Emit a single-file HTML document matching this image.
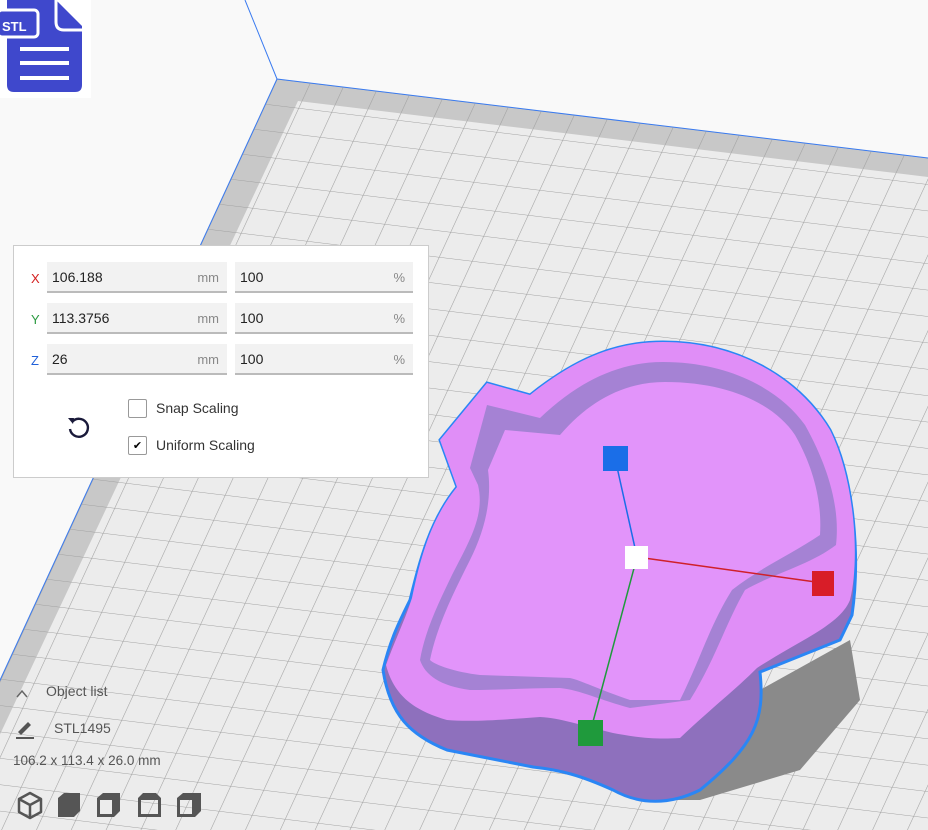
<!DOCTYPE html>
<html><head><style>
body{margin:0;width:928px;height:830px;overflow:hidden;background:#f9f9f9;font-family:"Liberation Sans",sans-serif;position:relative}
svg{position:absolute;left:0;top:0}
.panel{position:absolute;left:13px;top:245px;width:416px;height:233px;background:#fff;border:1px solid #ccc;box-sizing:border-box}
.row{position:absolute;left:0;height:32px;width:415px}
.lab{position:absolute;left:17px;top:9px;font-size:13px}
.f{position:absolute;top:0;height:31px;background:#f2f2f2;border-bottom:2px solid #bbb;font-size:14px;color:#222;line-height:31px;padding-left:5px;box-sizing:border-box}
.u{position:absolute;right:8px;top:0;color:#888;font-size:13px}
.cb{position:absolute;left:114px;width:19px;height:19px;border:1px solid #999;border-radius:2px;background:#fff;box-sizing:border-box;font-size:11px;text-align:center;line-height:18px}
.cl{position:absolute;left:142px;font-size:14px;color:#333}
.bl{position:absolute;color:#555;font-size:14px}
</style></head><body>
<svg width="928" height="830">
<defs>
<pattern id="g" patternUnits="userSpaceOnUse" width="10" height="10" patternTransform="matrix(3.3 0.4 -1.15 2.5 277 79)">
<path d="M0 0H10M0 0V10" stroke="#a0a0a0" stroke-width="0.35" fill="none"/>
</pattern>
<clipPath id="pl"><polygon points="277,79 928,158 928,830 -69,830"/></clipPath>
</defs>
<line x1="245" y1="0" x2="277" y2="79" stroke="#3a7bf0" stroke-width="1"/>
<polygon points="277,79 928,158 928,830 -69,830" fill="#c8c8c8"/>
<polygon points="298,101 928,177 928,830 -45,830" fill="#ececec"/>
<rect width="928" height="830" fill="url(#g)" clip-path="url(#pl)"/>
<line x1="277" y1="79" x2="928" y2="158" stroke="#3a7bf0" stroke-width="1"/>
<line x1="277" y1="79" x2="-69" y2="830" stroke="#3a7bf0" stroke-width="1"/>
<!-- shadow -->
<polygon points="760,690 850,640 860,700 800,770 700,800 640,800" fill="#8a8a8a"/>
<!-- object side -->
<path d="M440,440 L487,383 L530,395 C580,355 620,342 663,342 C740,342 800,380 830,430 C855,480 860,560 852,615 L840,640 L760,672 C765,720 755,745 700,790 C670,805 640,805 613,790 C580,775 560,770 533,767 L447,750 C410,735 390,715 383,670 C390,640 400,620 410,600 C420,560 430,520 457,487 Z" fill="#8e70bd" stroke="#2a86f5" stroke-width="3"/>
<!-- top rim -->
<path d="M440,440 L487,383 L530,395 C580,355 620,342 663,342 C740,342 800,380 830,430 C855,480 860,560 850,600 C840,625 800,640 757,668 C735,690 715,705 680,738 C650,740 630,736 613,733 C580,725 560,718 540,717 C500,720 470,722 447,720 C420,712 395,700 386,665 C395,640 405,620 412,598 C420,560 430,520 457,487 Z" fill="#e08ef7"/>
<!-- inner wall -->
<path d="M487,405 L540,418 C580,380 620,362 663,362 C730,362 780,390 805,425 C830,470 840,510 836,545 C810,565 770,575 745,590 C725,625 715,660 690,700 L630,708 C600,700 580,690 560,688 C530,688 500,690 470,690 C440,686 425,675 420,660 C425,630 440,600 452,575 C470,540 485,515 478,485 L470,468 Z" fill="#a582d4"/>
<!-- inner floor -->
<path d="M505,430 L560,435 C590,400 625,382 665,382 C730,382 775,405 795,435 C815,470 822,505 820,535 C790,555 760,568 732,590 C710,625 700,660 680,700 L630,700 C600,690 580,680 570,678 L480,675 C455,672 435,665 430,660 C437,625 455,590 470,560 C485,530 492,500 488,470 Z" fill="#e294fa"/>
<!-- gizmo -->
<line x1="615" y1="458" x2="637" y2="557" stroke="#1a6ee8" stroke-width="1.5"/>
<line x1="637" y1="557" x2="823" y2="583" stroke="#d0202a" stroke-width="1.5"/>
<line x1="637" y1="557" x2="590" y2="733" stroke="#1f9a3c" stroke-width="1.5"/>
<rect x="603" y="446" width="25" height="25" fill="#1a6ee8"/>
<rect x="625" y="546" width="23" height="23" fill="#fff"/>
<rect x="812" y="571" width="22" height="25" fill="#d81d28"/>
<rect x="578" y="720" width="25" height="26" fill="#1f9a3c"/>
<!-- STL icon -->
<rect x="0" y="0" width="91" height="98" fill="#fff"/>
<path d="M7,0 H56 L82,26 V85 Q82,92 75,92 H14 Q7,92 7,85 Z" fill="#3f48cc"/>
<path d="M56,0 V22 Q56,30 64,30 H82" fill="none" stroke="#fff" stroke-width="3"/>
<rect x="-2" y="10" width="40" height="27" rx="4" fill="#3f48cc" stroke="#fff" stroke-width="3"/>
<text x="2" y="31" font-family="Liberation Sans" font-weight="bold" font-size="13" fill="#fff">STL</text>
<rect x="20" y="47" width="49" height="4" fill="#fff"/>
<rect x="20" y="61" width="49" height="4" fill="#fff"/>
<rect x="20" y="76" width="49" height="4" fill="#fff"/>
<!-- bottom icons -->
<g fill="none" stroke="#555" stroke-width="2.5" stroke-linejoin="round">
<path d="M19,799 L30,793 L41,799 V812 L30,818 L19,812 Z M19,799 L30,805 L41,799 M30,805 V818"/>
</g>
<g fill="#555">
<path d="M58,798 L64,793 H80 V811 L74,817 H58 Z"/>
<path d="M97,798 L103,793 H120 V811 L114,817 H97 Z M100,800 V814 H112 V800 Z" fill-rule="evenodd"/>
<path d="M138,798 L143,793 H156 L161,798 V817 H138 Z M141,800 V814 H158 V800 Z" fill-rule="evenodd"/>
<path d="M177,798 L183,793 H201 V811 L195,817 H177 Z M180,800 V814 H192 V800 Z" fill-rule="evenodd"/>
</g>
<path d="M17,697 L22,691 L27,697" stroke="#666" stroke-width="1.5" fill="none"/>
<path d="M18,732 L28,722 L31,725 L21,735 Z" fill="#555"/><rect x="16" y="737" width="18" height="2" fill="#555"/>
</svg>
<div class="panel">
<div class="row" style="top:16px"><span class="lab" style="color:#d42020">X</span><div class="f" style="left:33px;width:180px">106.188<span class="u">mm</span></div><div class="f" style="left:221px;width:178px">100<span class="u">%</span></div></div>
<div class="row" style="top:57px"><span class="lab" style="color:#2a9a40">Y</span><div class="f" style="left:33px;width:180px">113.3756<span class="u">mm</span></div><div class="f" style="left:221px;width:178px">100<span class="u">%</span></div></div>
<div class="row" style="top:98px"><span class="lab" style="color:#2060d8">Z</span><div class="f" style="left:33px;width:180px">26<span class="u">mm</span></div><div class="f" style="left:221px;width:178px">100<span class="u">%</span></div></div>
<div class="cb" style="top:153px"></div><span class="cl" style="top:154px">Snap Scaling</span>
<div class="cb" style="top:190px">✔</div><span class="cl" style="top:191px">Uniform Scaling</span>
<svg style="left:52px;top:168px" width="26" height="26" viewBox="0 0 26 26"><path d="M6,8 A9,9 0 1 1 4,15" fill="none" stroke="#1a1a3a" stroke-width="2.4"/><path d="M2,4 L8,4 L7,10 Z" fill="#1a1a3a"/></svg>
</div>
<div class="bl" style="left:46px;top:683px">Object list</div>
<div class="bl" style="left:54px;top:720px">STL1495</div>
<div class="bl" style="left:13px;top:753px;font-size:13.5px">106.2 x 113.4 x 26.0 mm</div>
</body></html>
